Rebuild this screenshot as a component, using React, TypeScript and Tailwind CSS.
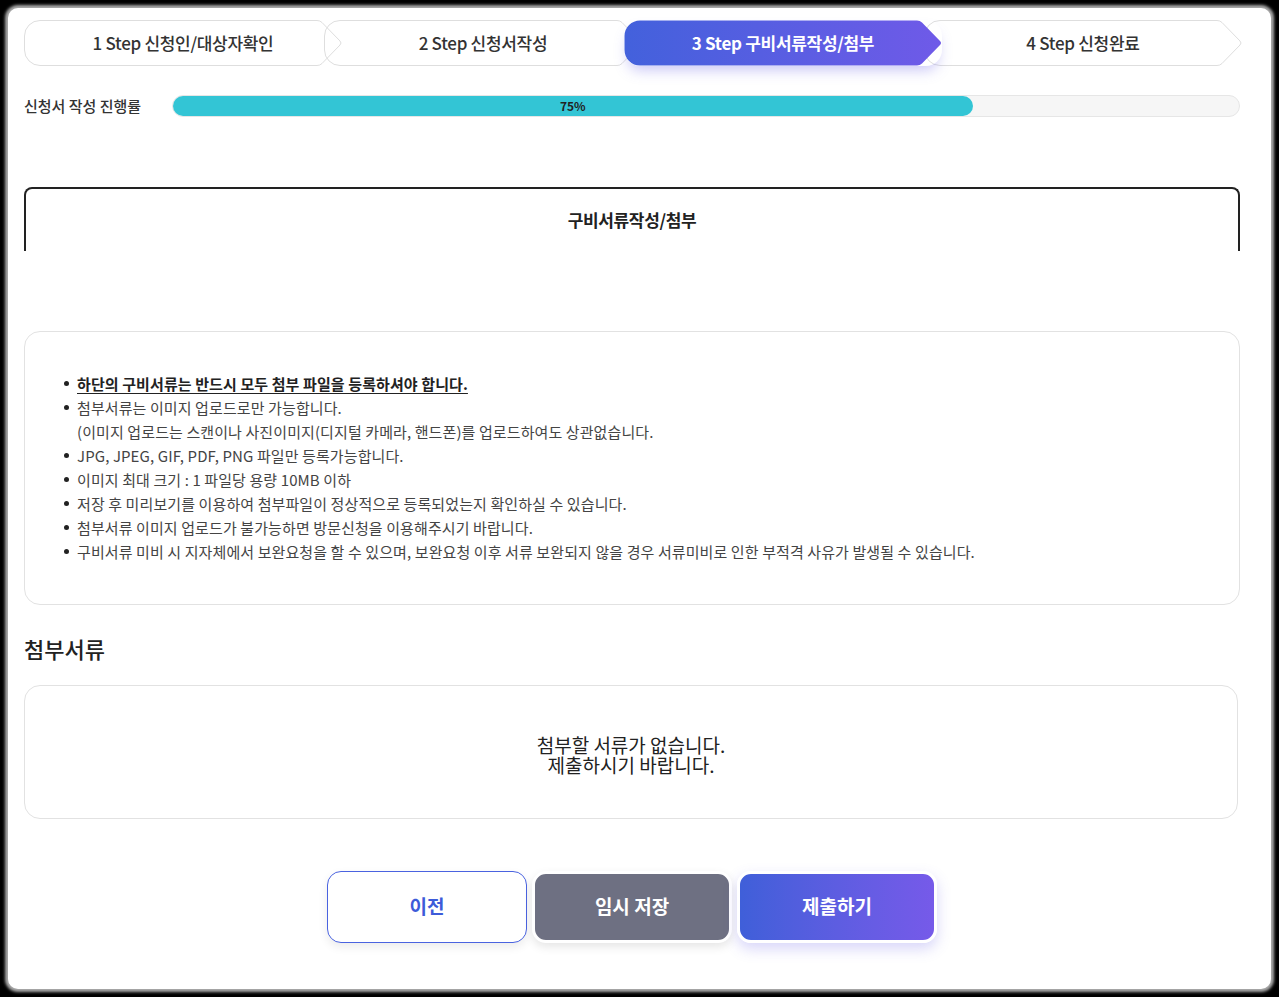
/**
 * App - 신청서 작성 3단계 (구비서류작성/첨부)
 */

const FONT = '"Noto Sans CJK KR", "Noto Sans", sans-serif';

const steps = [
  { no: 1, label: '신청인/대상자확인' },
  { no: 2, label: '신청서작성' },
  { no: 3, label: '구비서류작성/첨부' },
  { no: 4, label: '신청완료' },
];

const ACTIVE_STEP = 3;

const notices = [
  '첨부서류는 이미지 업로드로만 가능합니다.',
  'JPG, JPEG, GIF, PDF, PNG 파일만 등록가능합니다.',
  '이미지 최대 크기 : 1 파일당 용량 10MB 이하',
  '저장 후 미리보기를 이용하여 첨부파일이 정상적으로 등록되었는지 확인하실 수 있습니다.',
  '첨부서류 이미지 업로드가 불가능하면 방문신청을 이용해주시기 바랍니다.',
  '구비서류 미비 시 지자체에서 보완요청을 할 수 있으며, 보완요청 이후 서류 보완되지 않을 경우 서류미비로 인한 부적격 사유가 발생될 수 있습니다.',
];

/** Chevron shape behind each step */
function StepShape({ active }: { active: boolean }) {
  const d =
    'M16 0.5 H293 Q296 0.5 298 2.5 L316 21 Q318 23 316 25 L298 43.5 Q296 45.5 293 45.5 H16 A15.5 15.5 0 0 1 0.5 30 V16 A15.5 15.5 0 0 1 16 0.5 Z';
  return (
    <svg className="absolute inset-0" width="318" height="46" viewBox="0 0 318 46">
      <defs>
        <linearGradient id="stepGrad" x1="0" y1="0" x2="1" y2="0">
          <stop offset="0" stopColor="#4361dc" />
          <stop offset="1" stopColor="#6f5ae8" />
        </linearGradient>
      </defs>
      {active ? (
        <path d={d} fill="url(#stepGrad)" />
      ) : (
        <path d={d} fill="none" stroke="#dedede" strokeWidth="1" />
      )}
    </svg>
  );
}

function Stepper() {
  return (
    <div className="flex">
      {steps.map((s, i) => {
        const active = s.no === ACTIVE_STEP;
        return (
          <div
            key={s.no}
            className={`relative h-[46px] w-[318px] shrink-0 ${i > 0 ? '-ml-[18px]' : ''} ${
              active ? 'z-10 rounded-[16px] shadow-[0_8px_14px_-4px_rgba(99,92,230,0.35)]' : ''
            }`}
          >
            <StepShape active={active} />
            <div
              className={`relative flex h-full items-center justify-center text-[17px] tracking-[-0.3px] ${
                active ? 'font-bold text-white' : 'font-medium text-[#333]'
              }`}
            >
              {s.no} Step {s.label}
            </div>
          </div>
        );
      })}
    </div>
  );
}

function ProgressRow({ percent }: { percent: number }) {
  return (
    <div className="mt-[29px] flex items-center">
      <span className="w-[148px] shrink-0 text-[15px] font-medium text-[#333]">신청서 작성 진행률</span>
      <div className="h-[22px] flex-1 rounded-full border border-[#e6e6e6] bg-[#f6f6f6]">
        <div
          className="flex h-full items-center justify-center rounded-full bg-[#33c5d5] text-[12px] font-bold text-[#222]"
          style={{ width: `${percent}%` }}
        >
          {percent}%
        </div>
      </div>
    </div>
  );
}

function Bullet() {
  return (
    <span className="flex h-[24px] w-[13px] shrink-0 items-center">
      <span className="h-[5px] w-[5px] rounded-full bg-[#222]" />
    </span>
  );
}

export default function App() {
  return (
    <div className="min-h-[997px] bg-black p-[8px]" style={{ fontFamily: FONT }}>
      <div className="h-[981px] rounded-[10px] bg-white px-[16px] pt-[12px] shadow-[0_0_3px_3px_rgba(190,190,190,0.9)]">
        <div className="w-[1216px]">
          {/* Steps */}
          <Stepper />

          {/* Progress */}
          <ProgressRow percent={75} />

          {/* Section tab */}
          <div className="mt-[69px] flex h-[64px] items-center justify-center rounded-t-[8px] border-2 border-b-0 border-[#222]">
            <h2 className="text-[17px] font-bold tracking-[-0.02em] text-[#222]">구비서류작성/첨부</h2>
          </div>

          {/* Notices */}
          <div className="mt-[80px] rounded-[16px] border border-[#e2e2e2] py-[40px] pl-[39px] pr-[24px] text-[15px] leading-[24px] tracking-[0.1px] text-[#444]">
            <div className="flex">
              <Bullet />
              <span className="font-bold text-[#222] underline underline-offset-[3px]">
                하단의 구비서류는 반드시 모두 첨부 파일을 등록하셔야 합니다.
              </span>
            </div>
            {notices.map((n, i) => (
              <div key={i}>
                <div className="flex">
                  <Bullet />
                  <span>{n}</span>
                </div>
                {i === 0 && (
                  <div className="pl-[13px]">
                    (이미지 업로드는 스캔이나 사진이미지(디지털 카메라, 핸드폰)를 업로드하여도 상관없습니다.
                  </div>
                )}
              </div>
            ))}
          </div>

          {/* Attachments */}
          <h3 className="mt-[27px] text-[22px] font-medium text-[#222]">첨부서류</h3>
          <div className="mt-[20px] mr-[2px] flex h-[134px] flex-col items-center justify-center rounded-[16px] border border-[#e2e2e2] pt-[6px] text-[19px] leading-[20px] text-[#222]">
            <p>첨부할 서류가 없습니다.</p>
            <p>제출하시기 바랍니다.</p>
          </div>

          {/* Actions */}
          <div className="mt-[52px] flex justify-center gap-[5px]">
            <button className="h-[72px] w-[200px] rounded-[14px] border border-[#4a63e0] bg-white text-[19px] font-bold text-[#3d5bd9] shadow-[0_4px_10px_rgba(0,0,0,0.08)]">
              이전
            </button>
            <button className="h-[72px] w-[200px] rounded-[14px] border-[3px] border-white bg-[#6e7082] text-[19px] font-bold text-white shadow-[0_4px_10px_rgba(0,0,0,0.1)]">
              임시 저장
            </button>
            <button className="h-[72px] w-[200px] rounded-[14px] border-[3px] border-white bg-gradient-to-r from-[#3f5fd9] to-[#765ae9] text-[19px] font-bold text-white shadow-[0_6px_14px_rgba(99,92,230,0.25)]">
              제출하기
            </button>
          </div>
        </div>
      </div>
    </div>
  );
}
